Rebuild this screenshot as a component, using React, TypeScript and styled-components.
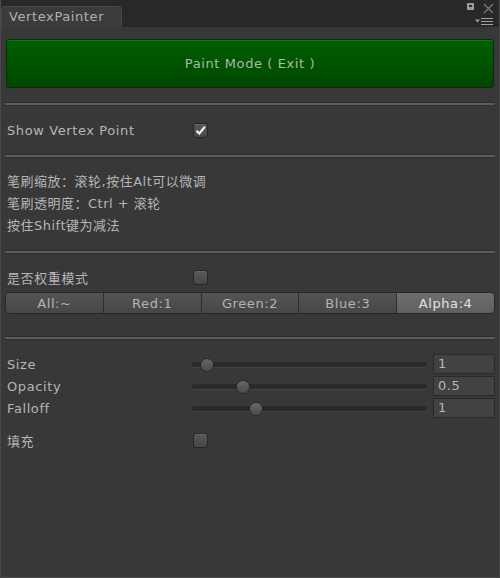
import styled, { createGlobalStyle } from 'styled-components';

const GlobalStyle = createGlobalStyle`
  html, body {
    margin: 0;
    padding: 0;
    background: #383838;
  }
  * {
    box-sizing: border-box;
  }
`;

const Window = styled.div`
  width: 500px;
  height: 578px;
  background: #383838;
  border: 1px solid #4a4a4a;
  border-top: none;
  display: flex;
  flex-direction: column;
  font-family: 'DejaVu Sans', 'Noto Sans CJK SC', sans-serif;
  font-size: 13px;
  color: #b6b6b6;
  overflow: hidden;
`;

const TitleBar = styled.div`
  height: 27px;
  background: #282828;
  display: flex;
  align-items: flex-end;
  margin: 0 -1px;
  padding-left: 1px;
`;

const Tab = styled.div`
  width: 121px;
  height: 21px;
  background: #3b3b3b;
  border: 1px solid #474747;
  border-bottom: none;
  border-radius: 4px 4px 0 0;
  padding: 2px 0 0 7px;
  letter-spacing: 0.6px;
  line-height: 16px;
  color: #b0b0b0;
`;

const WindowIcons = styled.div`
  margin-left: auto;
  height: 27px;
  width: 34px;
  margin-right: 6px;
  display: flex;
  flex-direction: column;
  justify-content: space-between;
  padding: 3px 0 2px;
`;

const IconRow = styled.div`
  display: flex;
  justify-content: flex-end;
  align-items: flex-start;
  gap: 9px;
`;

const Content = styled.div`
  padding: 12px 4px 0;
  display: flex;
  flex-direction: column;
`;

const PaintButton = styled.div`
  height: 49px;
  border-radius: 3px;
  border: 1px solid #0a2a0a;
  background: linear-gradient(#006000, #004600);
  box-shadow: inset 0 1px #0e760e;
  display: flex;
  align-items: center;
  justify-content: center;
  color: #a6bca6;
  letter-spacing: 0.6px;
  margin: 0 1px;
`;

const Separator = styled.div<{ $top: number }>`
  margin-top: ${(p) => p.$top}px;
  height: 3px;
  border-radius: 2px;
  background: #5c5c5c;
  border-top: 1px solid #2c2c2c;
  box-shadow: 0 1px #303030;
`;

const Row = styled.div<{ $top: number }>`
  margin-top: ${(p) => p.$top}px;
  height: 18px;
  display: flex;
  align-items: center;
`;

const Label = styled.div`
  width: 188px;
  padding-left: 2px;
  letter-spacing: 0.6px;
  white-space: nowrap;
`;

const CheckBox = styled.div`
  width: 15px;
  height: 15px;
  border-radius: 3px;
  border: 1px solid #262626;
  background: linear-gradient(#585858, #474747);
  box-shadow: inset 0 1px #666;
  display: flex;
  align-items: center;
  justify-content: center;
`;

const HelpBlock = styled.div`
  margin-top: 14px;
  padding-left: 2px;
  display: flex;
  flex-direction: column;
`;

const HelpLine = styled.div`
  height: 22px;
  line-height: 22px;
  letter-spacing: 0.5px;
  white-space: nowrap;
`;

const Toolbar = styled.div`
  margin-top: 6px;
  height: 22px;
  display: flex;
  border: 1px solid #272727;
  border-radius: 5px;
  overflow: hidden;
`;

const Segment = styled.div<{ $active?: boolean }>`
  flex: 1;
  display: flex;
  align-items: center;
  justify-content: center;
  letter-spacing: 0.6px;
  background: ${(p) => (p.$active ? 'linear-gradient(#6e6e6e, #606060)' : 'linear-gradient(#545454, #474747)')};
  color: ${(p) => (p.$active ? '#e2e2e2' : '#b4b4b4')};
  border-left: 1px solid #2e2e2e;
  &:first-child {
    border-left: none;
  }
`;

const SliderRows = styled.div`
  margin-top: 15px;
  display: flex;
  flex-direction: column;
  gap: 2px;
`;

const SliderRow = styled.div`
  height: 20px;
  display: flex;
  align-items: center;
`;

const Track = styled.div`
  position: relative;
  margin-left: -1px;
  width: 235px;
  height: 5px;
  border-radius: 3px;
  background: #2a2a2a;
  box-shadow: 0 1px #444;
`;

const Thumb = styled.div`
  position: absolute;
  top: -4px;
  width: 14px;
  height: 14px;
  margin-left: -7px;
  border-radius: 50%;
  border: 1px solid #2a2a2a;
  background: linear-gradient(#686868, #4a4a4a);
`;

const NumberField = styled.div`
  margin-left: 6px;
  width: 62px;
  height: 20px;
  background: #424242;
  border: 1px solid #2a2a2a;
  padding: 0 0 0 4px;
  line-height: 18px;
  letter-spacing: 0.6px;
`;

const sliders = [
  { name: 'Size', value: '1', pos: 15 },
  { name: 'Opacity', value: '0.5', pos: 51 },
  { name: 'Falloff', value: '1', pos: 64 },
];

const channels = ['All:~', 'Red:1', 'Green:2', 'Blue:3', 'Alpha:4'];

function Check() {
  return (
    <svg width="13" height="13" viewBox="0 0 13 13">
      <path d="M2.5 6.8 L5.3 9.6 L10.8 2.8" fill="none" stroke="#f2f2f2" strokeWidth="2.2" />
    </svg>
  );
}

function App() {
  return (
    <>
      <GlobalStyle />
      <Window>
        <TitleBar>
          <Tab>VertexPainter</Tab>
          <WindowIcons>
            <IconRow>
              <svg width="7" height="7" viewBox="0 0 7 7">
                <rect x="0.5" y="0.5" width="6" height="6" fill="#9a9a9a" stroke="#9a9a9a" />
                <rect x="2" y="2" width="3" height="2" fill="#2a2a2a" />
              </svg>
              <svg width="11" height="11" viewBox="0 0 11 11">
                <path d="M1 1 L10 10 M10 1 L1 10" stroke="#7a7a7a" strokeWidth="1.3" />
              </svg>
            </IconRow>
            <IconRow>
              <svg width="19" height="7" viewBox="0 0 19 7">
                <path d="M0 1.5 L5 1.5 L2.5 4.5 Z" fill="#a0a0a0" />
                <path d="M6 0.5 H18 M6 3.5 H18 M6 6.5 H18" stroke="#a0a0a0" strokeWidth="1.2" />
              </svg>
            </IconRow>
          </WindowIcons>
        </TitleBar>
        <Content>
          <PaintButton>Paint Mode ( Exit )</PaintButton>
          <Separator $top={14} />
          <Row $top={16}>
            <Label>Show Vertex Point</Label>
            <CheckBox>
              <Check />
            </CheckBox>
          </Row>
          <Separator $top={15} />
          <HelpBlock>
            <HelpLine>笔刷缩放：滚轮,按住Alt可以微调</HelpLine>
            <HelpLine>笔刷透明度：Ctrl + 滚轮</HelpLine>
            <HelpLine>按住Shift键为减法</HelpLine>
          </HelpBlock>
          <Separator $top={13} />
          <Row $top={15}>
            <Label>是否权重模式</Label>
            <CheckBox />
          </Row>
          <Toolbar>
            {channels.map((c, i) => (
              <Segment key={c} $active={i === channels.length - 1}>
                {c}
              </Segment>
            ))}
          </Toolbar>
          <Separator $top={22} />
          <SliderRows>
            {sliders.map((s) => (
              <SliderRow key={s.name}>
                <Label>{s.name}</Label>
                <Track>
                  <Thumb style={{ left: `${s.pos}px` }} />
                </Track>
                <NumberField>{s.value}</NumberField>
              </SliderRow>
            ))}
          </SliderRows>
          <Row $top={13}>
            <Label>填充</Label>
            <CheckBox />
          </Row>
        </Content>
      </Window>
    </>
  );
}

export default App;
